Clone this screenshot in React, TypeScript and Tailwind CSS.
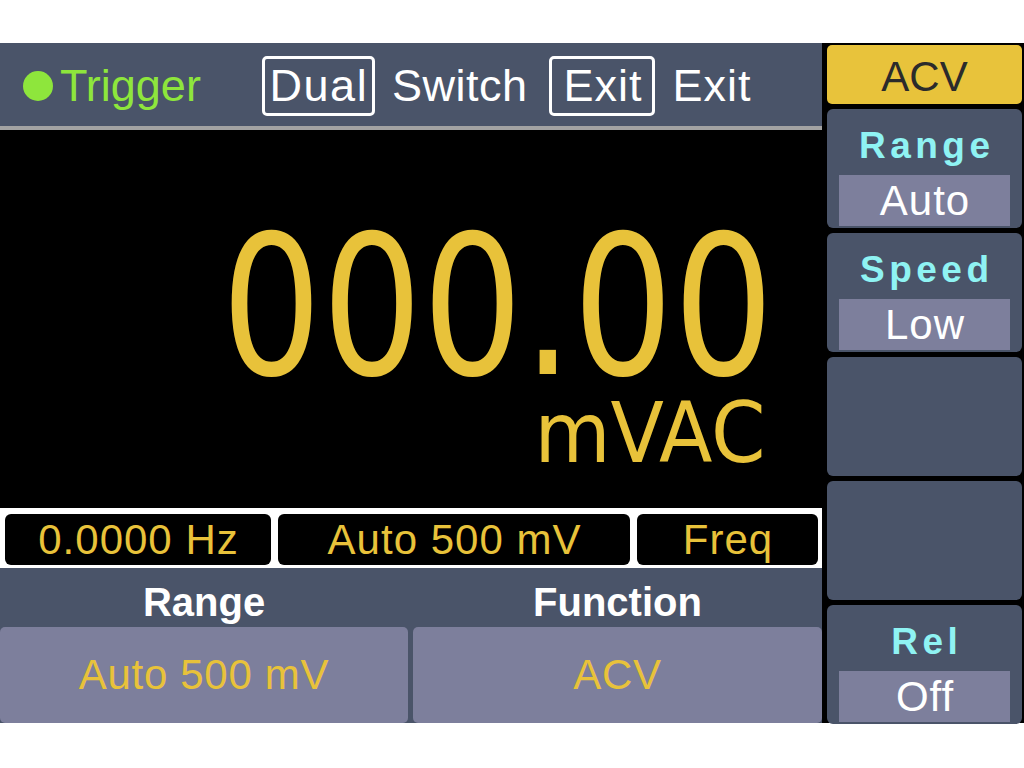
import React from "react";

const SLATE = "bg-[#4a5469]";

function MenuButton({ title, value }: { title?: string; value?: string }) {
  return (
    <div className={`h-[119px] shrink-0 rounded-[6px] ${SLATE} flex flex-col`}>
      {title && (
        <div className="pt-[18px] h-[37px] box-content text-center text-[37px] leading-none font-bold tracking-[4.5px] pl-[4.5px] text-[#8ff3f3]">
          {title}
        </div>
      )}
      {value && (
        <div className="mt-auto mb-[2px] mx-[12px] h-[51px] bg-[#7d7f9c] flex items-center justify-center text-white text-[42px] leading-none tracking-[1px] pl-[1px]">
          {value}
        </div>
      )}
    </div>
  );
}

export default function App() {
  return (
    <div className="w-[1024px] h-[768px] bg-white flex flex-col font-['Liberation_Sans',Arial,sans-serif] overflow-hidden">
      <div className="h-[43px] shrink-0" />
      <div className="flex h-[680px] shrink-0">
        {/* Left area */}
        <div className="w-[822px] shrink-0 flex flex-col">
          {/* Top bar */}
          <div className={`h-[83px] shrink-0 ${SLATE} flex items-center pt-[2px] text-[45px] leading-none text-white`}>
            <div className="ml-[23px] w-[30px] h-[30px] rounded-full bg-[#8ee63c]" />
            <span className="ml-[7px] text-[#8ee63c]">Trigger</span>
            <div className="ml-[61px] w-[113px] h-[60px] border-[3px] border-white rounded-[5px] flex items-center justify-center tracking-[1.5px] pl-[1px]">
              Dual
            </div>
            <span className="ml-[17px] tracking-[0.5px]">Switch</span>
            <div className="ml-[22px] w-[106px] h-[60px] border-[3px] border-white rounded-[5px] flex items-center justify-center tracking-[1px] pl-[1px]">
              Exit
            </div>
            <span className="ml-[17px] tracking-[1px]">Exit</span>
          </div>
          <div className="h-[4px] shrink-0 bg-[#a3a3a3]" />
          {/* Main reading */}
          <div className="h-[378px] shrink-0 bg-black flex flex-col items-end text-[#e8c23a]">
            <div className="mt-[97px] h-[160px] pr-[48px] text-[195px] leading-[160px] font-['DejaVu_Sans_Condensed','DejaVu_Sans',sans-serif]">
              <span className="inline-block origin-right scale-x-[0.9]">000.00</span>
            </div>
            <div className="mt-[4px] h-[84px] pr-[56px] text-[84px] leading-[84px] font-['DejaVu_Sans',sans-serif]">
              <span className="inline-block origin-right scale-x-[0.93]">mVAC</span>
            </div>
          </div>
          {/* Info strip */}
          <div className="h-[60px] shrink-0 bg-white flex pl-[5px] pr-[4px] pt-[6px] pb-[3px] gap-[7px] text-[#e8c23a] text-[42px] leading-none tracking-[1px]">
            <div className="w-[266px] bg-black rounded-[6px] flex items-center justify-center pl-[1px]">0.0000 Hz</div>
            <div className="w-[352px] bg-black rounded-[6px] flex items-center justify-center pl-[1px]">Auto 500 mV</div>
            <div className="flex-1 bg-black rounded-[6px] flex items-center justify-center pl-[1px]">Freq</div>
          </div>
          {/* Bottom section */}
          <div className={`h-[155px] shrink-0 ${SLATE} flex flex-col`}>
            <div className="h-[59px] shrink-0 flex gap-[5px] text-white font-bold text-[40px] leading-none">
              <div className="w-[408px] flex items-center justify-center pt-[8px]">Range</div>
              <div className="flex-1 flex items-center justify-center pt-[8px]">Function</div>
            </div>
            <div className="h-[96px] shrink-0 flex gap-[5px] text-[#e8c23a] text-[42px] leading-none tracking-[0.7px]">
              <div className="w-[408px] rounded-[5px] bg-[#7d7f9c] flex items-center justify-center">Auto 500 mV</div>
              <div className="flex-1 rounded-[5px] bg-[#7d7f9c] flex items-center justify-center">ACV</div>
            </div>
          </div>
        </div>
        {/* Right panel */}
        <div className="flex-1 bg-black flex flex-col pl-[5px] pr-[2px] pt-[2px] gap-[5px]">
          <div className="h-[59px] shrink-0 rounded-[5px] bg-[#e8c33b] flex items-center justify-center pt-[5px] text-[42px] leading-none text-[#2b2b2b]">
            ACV
          </div>
          <MenuButton title="Range" value="Auto" />
          <MenuButton title="Speed" value="Low" />
          <MenuButton />
          <MenuButton />
          <MenuButton title="Rel" value="Off" />
        </div>
      </div>
    </div>
  );
}
